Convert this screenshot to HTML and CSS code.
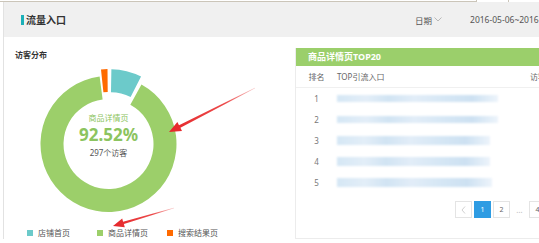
FILE: index.html
```html
<!DOCTYPE html>
<html lang="zh-CN">
<head>
    <meta charset="UTF-8">
    <meta name="viewport" content="width=device-width, initial-scale=1.0">
    <title>流量入口</title>
    <link rel="stylesheet" href="styles.css">
</head>
<body>
    <div class="topbar">
        <div class="topbar-line"></div>
        <div class="topbar-tab"></div>
    </div>
    <div class="page">
        <div class="header">
            <div class="header-title">流量入口</div>
            <div class="header-filter">
                <span>日期</span>
                <svg class="chevron" width="8" height="5" viewBox="0 0 8 5"><polyline points="0.5,0.5 4,4 7.5,0.5" fill="none" stroke="#aaa" stroke-width="0.8"/></svg>
                <span class="date-range">2016-05-06~2016-05-12</span>
            </div>
        </div>

        <div class="main">
            <div class="left">
                <div class="section-title">访客分布</div>
                <div class="chart">
                    <svg width="187" height="162" viewBox="0 0 187 162">
                        <path d="M126.47 24.53 A68 68 0 1 1 84.62 16.58 L87.63 39.39 A45 45 0 1 0 115.32 44.64 Z" fill="#9ccf6a"/>
                        <path d="M96.38 9.22 A68 68 0 0 1 126.06 16.62 L115.62 37.11 A45 45 0 0 0 95.98 32.22 Z" fill="#6ccaca"/>
                        <path d="M85.99 9.38 A68 68 0 0 1 92.51 9.01 L92.71 32.01 A45 45 0 0 0 88.40 32.26 Z" fill="#ff6a00"/>
                    </svg>
                    <div class="chart-label">
                        <div class="chart-label-name">商品详情页</div>
                        <div class="chart-label-value">92.52%</div>
                        <div class="chart-label-count">297个访客</div>
                    </div>
                </div>
                <div class="legend">
                    <div class="legend-item"><span class="swatch teal"></span>店铺首页</div>
                    <div class="legend-item"><span class="swatch green"></span>商品详情页</div>
                    <div class="legend-item"><span class="swatch orange"></span>搜索结果页</div>
                </div>
            </div>

            <div class="panel">
                <div class="panel-title">商品详情页TOP20</div>
                <div class="table-row table-head">
                    <div class="col-rank">排名</div>
                    <div>TOP引流入口</div>
                    <div>访客数</div>
                </div>
                <div class="table-row">
                    <div class="col-rank">1</div>
                    <div><div class="blur" style="width:161px"></div></div>
                    <div></div>
                </div>
                <div class="table-row">
                    <div class="col-rank">2</div>
                    <div><div class="blur" style="width:161px"></div></div>
                    <div></div>
                </div>
                <div class="table-row">
                    <div class="col-rank">3</div>
                    <div><div class="blur tall" style="width:153px"></div></div>
                    <div></div>
                </div>
                <div class="table-row">
                    <div class="col-rank">4</div>
                    <div><div class="blur tall" style="width:153px"></div></div>
                    <div></div>
                </div>
                <div class="table-row">
                    <div class="col-rank">5</div>
                    <div><div class="blur tall" style="width:155px"></div></div>
                    <div></div>
                </div>
                <div class="pager">
                    <span class="page-btn prev">
                        <svg width="5" height="8" viewBox="0 0 5 8"><polyline points="4,0.5 1,4 4,7.5" fill="none" stroke="#c4c4c4" stroke-width="0.8"/></svg>
                    </span>
                    <span class="page-btn active">1</span>
                    <span class="page-btn">2</span>
                    <span class="page-dots">…</span>
                    <span class="page-btn">4</span>
                </div>
            </div>
        </div>
    </div>

    <svg class="arrows" width="539" height="243" viewBox="0 0 539 243">
        <defs>
            <linearGradient id="fade1" gradientUnits="userSpaceOnUse" x1="255" y1="88" x2="169" y2="132">
                <stop offset="0" stop-color="#f7c9c9"/>
                <stop offset="0.35" stop-color="#ec4a4a"/>
                <stop offset="1" stop-color="#e5262a"/>
            </linearGradient>
            <linearGradient id="fade2" gradientUnits="userSpaceOnUse" x1="174" y1="208" x2="113" y2="226">
                <stop offset="0" stop-color="#f7c9c9"/>
                <stop offset="0.35" stop-color="#ec4a4a"/>
                <stop offset="1" stop-color="#e5262a"/>
            </linearGradient>
        </defs>
        <polygon fill="url(#fade1)" points="255.1,88.3 180.4,127.8 182.0,131.0 169,132 177.4,122.0 179.0,125.2 254.9,87.7"/>
        <polygon fill="url(#fade2)" points="174.1,208.3 123.9,224.1 124.8,227.2 113,226 122.2,218.6 123.1,221.7 173.9,207.7"/>
    </svg>
</body>
</html>
```

FILE: styles.css
```css
body {
    margin: 0;
    width: 539px;
    height: 243px;
    overflow: hidden;
    position: relative;
    background-color: #fff;
    font-family: "Noto Sans", "Noto Sans CJK SC", sans-serif;
    color: #333;
}
.topbar {
    display: flex;
    height: 2px;
}
.topbar-line {
    width: 476px;
    border-bottom: 1px solid #cbc5b9;
}
.topbar-tab {
    width: 31px;
    border-left: 1px solid #cbc5b9;
    border-right: 1px solid #cbc5b9;
}
.page {
    margin-left: 3px;
    width: 620px;
    border-left: 1px solid #e2e2e2;
}
.header {
    height: 35px;
    background-color: #f0f0f0;
    display: flex;
    align-items: center;
    padding-left: 17px;
}
.header-title {
    display: flex;
    align-items: center;
    font-size: 10px;
    font-weight: bold;
    color: #333;
}
.header-title::before {
    content: "";
    width: 3px;
    height: 10px;
    margin-right: 2px;
    background-color: #1cb0b8;
}
.header-filter {
    display: flex;
    align-items: center;
    margin-left: 349px;
    font-size: 8.5px;
    color: #555;
}
.chevron {
    margin-left: 2px;
}
.date-range {
    margin-left: 28px;
}
.main {
    display: flex;
}
.left {
    width: 291px;
    padding: 13px 0 0 11px;
    box-sizing: border-box;
}
.section-title {
    font-size: 8px;
    line-height: 10px;
    font-weight: bold;
    color: #333;
}
.chart {
    position: relative;
    width: 187px;
    height: 162px;
}
.chart svg {
    display: block;
}
.chart-label {
    position: absolute;
    top: 52px;
    left: 0;
    width: 187px;
    text-align: center;
}
.chart-label-name {
    font-size: 8px;
    line-height: 12px;
    color: #8cc460;
}
.chart-label-value {
    margin-top: 1px;
    font-size: 17px;
    line-height: 20px;
    font-weight: bold;
    color: #8cc460;
}
.chart-label-count {
    margin-top: 2px;
    font-size: 8px;
    line-height: 12px;
    color: #555;
}
.legend {
    display: flex;
    margin-top: 6px;
    padding-left: 12px;
}
.legend-item {
    width: 70px;
    display: flex;
    align-items: center;
    gap: 5px;
    font-size: 8px;
    line-height: 10px;
    color: #555;
}
.swatch {
    width: 6px;
    height: 6px;
}
.swatch.teal { background-color: #6ccaca; }
.swatch.green { background-color: #9ccf6a; }
.swatch.orange { background-color: #ff6a00; }

.panel {
    width: 260px;
    height: 191px;
    margin-top: 11px;
    border-left: 1px solid #ececec;
    border-bottom: 1px solid #ececec;
    box-sizing: border-box;
}
.panel-title {
    height: 18px;
    line-height: 18px;
    padding-left: 12px;
    background-color: #9bcf6b;
    color: #fff;
    font-size: 9px;
    font-weight: bold;
}
.table-row {
    display: grid;
    grid-template-columns: 41px 193px 1fr;
    align-items: center;
    height: 21px;
    font-size: 8px;
    color: #777;
    white-space: nowrap;
}
.table-head {
    height: 22px;
    border-bottom: 1px solid #f0f0f0;
    box-sizing: border-box;
    color: #666;
}
.col-rank {
    text-align: center;
}
.blur {
    height: 7px;
    background: linear-gradient(90deg, #d5e7f5, #e3eef8 18%, #d1e4f3 32%, #e2edf8 48%, #d6e7f5 66%, #cde1f2 84%, #edf4fb);
    filter: blur(1px);
}
.blur.tall {
    height: 9px;
}
.pager {
    display: flex;
    align-items: center;
    gap: 2px;
    margin-top: 8px;
    padding-left: 159px;
}
.page-btn {
    width: 17px;
    height: 17px;
    box-sizing: border-box;
    border: 1px solid #e4e4e4;
    display: flex;
    align-items: center;
    justify-content: center;
    font-size: 7px;
    color: #666;
    background-color: #fff;
}
.page-btn.active {
    background-color: #2e9ce3;
    border-color: #2e9ce3;
    color: #fff;
}
.page-dots {
    width: 15px;
    text-align: center;
    font-size: 8px;
    color: #bbb;
}
.arrows {
    position: absolute;
    top: 0;
    left: 0;
    pointer-events: none;
}
```
